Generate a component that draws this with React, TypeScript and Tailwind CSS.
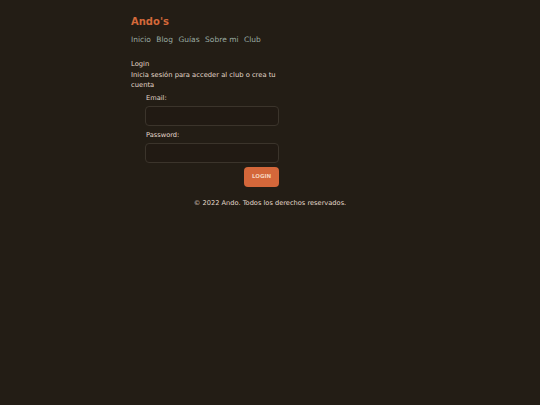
export default function App() {
  return (
    <div className="min-h-screen w-full bg-[#231d15] font-['DejaVu_Sans',sans-serif] text-[#e2d8ca] antialiased">
      <div className="mx-auto flex w-[280px] flex-col items-center pt-[14px]">
        <div className="w-[150px] self-start ml-[1px]">
          {/* Header */}
          <h1 className="text-[10px] font-bold leading-[16px] text-[#d4693a]">Ando's</h1>
          <nav className="mt-[4px] flex gap-[5.5px] text-[7.5px] leading-[12px] text-[#9aaba2]">
            <a href="#">Inicio</a>
            <a href="#">Blog</a>
            <a href="#">Guías</a>
            <a href="#">Sobre mi</a>
            <a href="#">Club</a>
          </nav>

          {/* Login */}
          <div className="mt-[13px] text-[6.75px] leading-[10.5px]">
            <p>Login</p>
            <p>Inicia sesión para acceder al club o crea tu cuenta</p>
          </div>

          <form className="flex flex-col pl-[14px] pr-[2px] text-[6.65px]">
            <label className="pl-[1px] leading-[14px]">Email:</label>
            <input
              type="email"
              className="mt-[1px] h-[20px] w-full rounded-[4px] border border-[#3b342b] bg-[#211a13] outline-none"
            />
            <label className="mt-[2px] pl-[1px] leading-[14px]">Password:</label>
            <input
              type="password"
              className="mt-[1px] h-[20px] w-full rounded-[4px] border border-[#3b342b] bg-[#211a13] outline-none"
            />
            <div className="mt-[4px] flex justify-end">
              <button
                type="button"
                className="h-[20px] w-[35px] rounded-[4px] bg-[#d4673a] text-[5.5px] font-bold text-[#f5d2bc]"
              >
                LOGIN
              </button>
            </div>
          </form>
        </div>

        {/* Footer */}
        <footer className="mt-[10px] w-full text-center text-[6.65px] leading-[12px]">
          © 2022 Ando. Todos los derechos reservados.
        </footer>
      </div>
    </div>
  );
}
